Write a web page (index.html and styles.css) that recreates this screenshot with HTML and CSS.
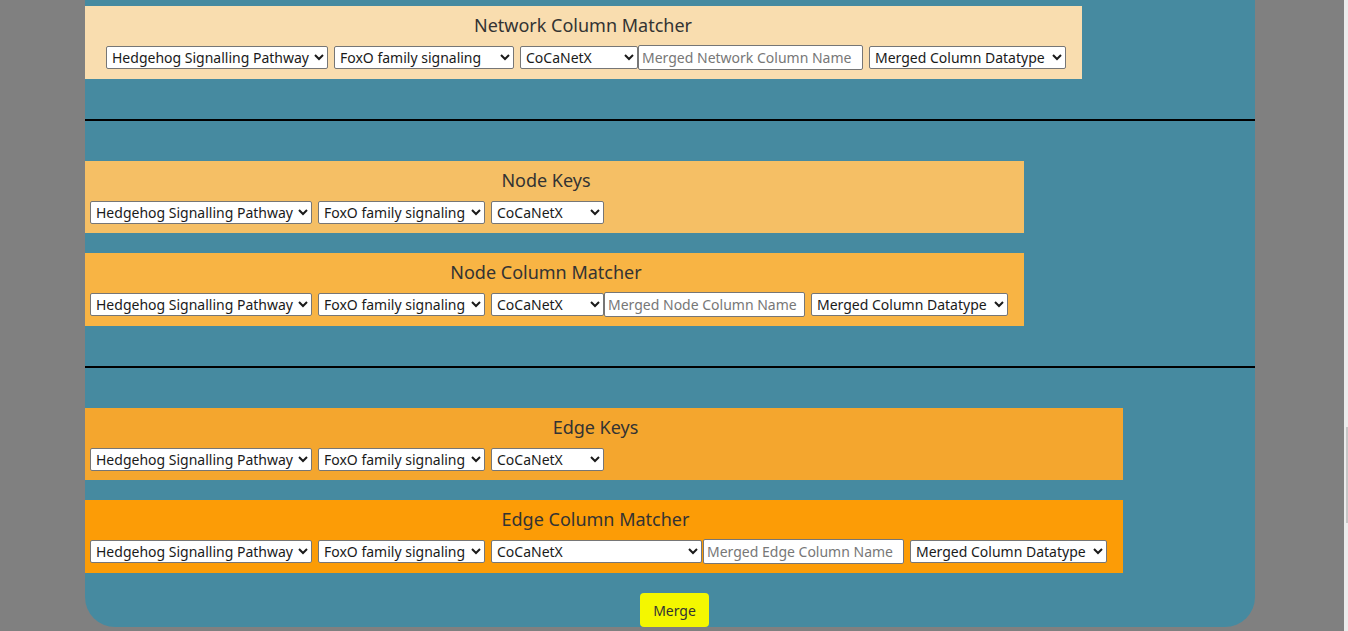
FILE: index.html
```html
<!DOCTYPE html>
<html lang="en">
<head>
<meta charset="utf-8">
<title>Network Merger</title>
<link rel="stylesheet" href="styles.css">
</head>
<body>
<main class="panel">
  <section class="box box-net">
    <div class="title">Network Column Matcher</div>
    <div class="row">
      <select class="sel s-pathway"><option>Hedgehog Signalling Pathway</option></select>
      <select class="sel s-foxo s-foxo-wide"><option>FoxO family signaling</option></select>
      <select class="sel s-coca-net"><option>CoCaNetX</option></select><input class="name in-net" type="text" placeholder="Merged Network Column Name">
      <select class="sel s-type"><option>Merged Column Datatype</option></select>
    </div>
  </section>

  <hr class="divider">

  <div class="group">
    <section class="box box-nodekeys">
      <div class="title">Node Keys</div>
      <div class="row">
        <select class="sel s-pathway"><option>Hedgehog Signalling Pathway</option></select>
        <select class="sel s-foxo"><option>FoxO family signaling</option></select>
        <select class="sel s-coca"><option>CoCaNetX</option></select>
      </div>
    </section>
    <section class="box box-nodecols">
      <div class="title">Node Column Matcher</div>
      <div class="row">
        <select class="sel s-pathway"><option>Hedgehog Signalling Pathway</option></select>
        <select class="sel s-foxo"><option>FoxO family signaling</option></select>
        <select class="sel s-coca"><option>CoCaNetX</option></select><input class="name in-small" type="text" placeholder="Merged Node Column Name">
        <select class="sel s-type"><option>Merged Column Datatype</option></select>
      </div>
    </section>
  </div>

  <hr class="divider">

  <div class="group">
    <section class="box box-edgekeys">
      <div class="title">Edge Keys</div>
      <div class="row">
        <select class="sel s-pathway"><option>Hedgehog Signalling Pathway</option></select>
        <select class="sel s-foxo"><option>FoxO family signaling</option></select>
        <select class="sel s-coca"><option>CoCaNetX</option></select>
      </div>
    </section>
    <section class="box box-edgecols">
      <div class="title">Edge Column Matcher</div>
      <div class="row">
        <select class="sel s-pathway"><option>Hedgehog Signalling Pathway</option></select>
        <select class="sel s-foxo"><option>FoxO family signaling</option></select>
        <select class="sel s-coca-wide"><option>CoCaNetX</option></select><input class="name in-small in-gap" type="text" placeholder="Merged Edge Column Name">
        <select class="sel s-type"><option>Merged Column Datatype</option></select>
      </div>
    </section>
  </div>

  <div class="actions">
    <button class="merge" type="button">Merge</button>
  </div>
</main>
<div class="scrollbar"><div class="thumb"></div></div>
</body>
</html>
```

FILE: styles.css
```css
html, body {
  margin: 0;
  padding: 0;
}
body {
  background: #808080;
  font-family: "Noto Sans", "Open Sans", sans-serif;
  color: #333;
  overflow: hidden;
  height: 631px;
}
.panel {
  margin-left: 85px;
  width: 1170px;
  background: #468aa0;
  border-radius: 0 0 30px 30px;
  padding-top: 6px;
  display: flex;
  flex-direction: column;
  align-items: flex-start;
}
.group {
  display: flex;
  flex-direction: column;
  gap: 20px;
  align-items: stretch;
}
.box {
  box-sizing: border-box;
  padding: 6px 16px 9px 5px;
}
.box-net {
  padding-left: 21px;
  background: #f9ddaf;
}
.box-nodekeys { background: #f5bf65; }
.box-nodecols { background: #f8b444; }
.box-edgekeys { background: #f4a62e; }
.box-edgecols { background: #fc9c06; }
.title {
  font-size: 18px;
  line-height: 26px;
  text-align: center;
  padding-right: 6px;
  margin-bottom: 7px;
  color: #333;
}
.row {
  display: flex;
  align-items: center;
  min-height: 24px;
}
.sel {
  font-family: "Noto Sans", "Open Sans", sans-serif;
  font-size: 14px;
  color: #1a1a1a;
  height: 23px;
  margin: 0 6px 0 0;
  box-sizing: border-box;
  background: #fff;
  border: 1px solid #767676;
  border-radius: 2px;
  padding: 0 0 0 1px;
}
.s-pathway { width: 222px; }
.s-foxo { width: 167px; }
.s-foxo-wide { width: 180px; }
.s-coca { width: 113px; margin-right: 0; }
.s-coca-net { width: 118px; margin-right: 0; }
.s-coca-wide { width: 211px; margin-right: 0; }
.s-type { width: 197px; margin-right: 0; }
.name {
  font-family: "Noto Sans", "Open Sans", sans-serif;
  font-size: 14px;
  box-sizing: border-box;
  height: 25px;
  margin: 0 6px 0 0;
  border: 1px solid #767676;
  border-radius: 2px;
  padding: 0 3px;
  background: #fff;
  color: #222;
}
.name::placeholder { color: #777; }
.in-net { width: 225px; }
.in-small { width: 201px; }
.in-gap { margin-left: 1px; }
.divider {
  align-self: stretch;
  border: 0;
  height: 2px;
  background: #000;
  margin: 40px 0;
}
.actions {
  align-self: stretch;
  display: flex;
  justify-content: center;
  padding-left: 9px;
  margin-top: 20px;
}
.merge {
  font-family: "Noto Sans", "Open Sans", sans-serif;
  font-size: 14px;
  color: #333;
  background: #f4f700;
  border: 0;
  border-radius: 4px;
  width: 69px;
  height: 34px;
  padding: 0;
}
.scrollbar {
  position: fixed;
  top: 0;
  right: 0;
  width: 4px;
  height: 631px;
  background: #ececec;
}
.thumb {
  position: absolute;
  right: 0;
  top: 427px;
  width: 2px;
  height: 96px;
  background: #c6c6c6;
}
```
